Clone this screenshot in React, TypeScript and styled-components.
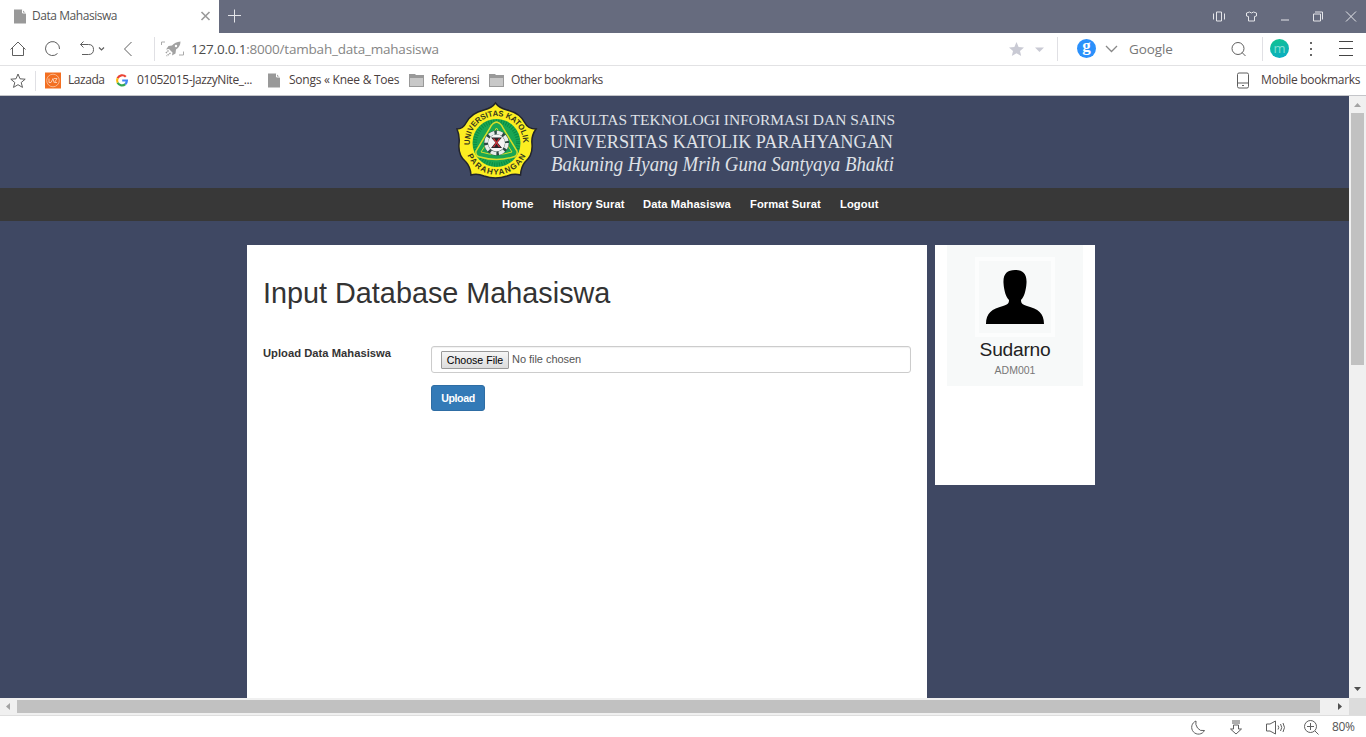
import React from "react";
import styled, { createGlobalStyle } from "styled-components";

const GlobalStyle = createGlobalStyle`
  * { box-sizing: border-box; }
  body { margin: 0; overflow: hidden; background: #3f4863; }
  button { font-family: inherit; margin: 0; }
`;

const uiFont = `"Open Sans", "Noto Sans", sans-serif`;
const pageFont = `"Liberation Sans", Arial, sans-serif`;

const Window = styled.div`
  width: 1366px;
  height: 737px;
  display: flex;
  flex-direction: column;
  background: #fff;
  overflow: hidden;
  font-family: ${uiFont};
`;

/* ---------- browser chrome ---------- */
const TitleBar = styled.header`
  height: 33px;
  flex: none;
  display: flex;
  align-items: center;
  background: #666b7e;
`;
const Tab = styled.div`
  width: 219px;
  height: 33px;
  display: flex;
  align-items: center;
  padding: 0 9px 0 14px;
  background: #fff;
`;
const Toolbar = styled.div`
  height: 33px;
  flex: none;
  display: flex;
  align-items: center;
  border-bottom: 1px solid #e2e2e4;
`;
const BookmarkBar = styled.nav`
  height: 30px;
  flex: none;
  display: flex;
  align-items: center;
  border-bottom: 1px solid #c4c5c9;
`;
const Icon = styled.svg<{ $left?: number }>`
  display: block;
  flex: none;
  overflow: visible;
  margin-left: ${(p) => p.$left ?? 0}px;
  fill: none;
  stroke: #5f5f5f;
`;
const Label = styled.span<{ $left?: number; $spacing?: number; $size?: number; $color?: string }>`
  flex: none;
  white-space: nowrap;
  line-height: 18px;
  margin-top: -1px;
  margin-left: ${(p) => p.$left ?? 0}px;
  font-size: ${(p) => p.$size ?? 12}px;
  letter-spacing: ${(p) => p.$spacing ?? 0}px;
  color: ${(p) => p.$color ?? "#4a4040"};
`;
const Host = styled.span`
  color: #4c4c4c;
`;
const Fixed = styled.div<{ $width: number }>`
  width: ${(p) => p.$width}px;
  flex: none;
  display: flex;
  align-items: center;
`;
const Spacer = styled.div`
  flex: 1;
`;
const Rule = styled.i<{ $left?: number; $height?: number }>`
  width: 1px;
  height: ${(p) => p.$height ?? 24}px;
  flex: none;
  margin-left: ${(p) => p.$left ?? 0}px;
  background: #e0e0e4;
`;
const Badge = styled.span<{ $left: number; $bg: string; $color: string }>`
  width: 19px;
  height: 19px;
  flex: none;
  margin-top: -1px;
  margin-left: ${(p) => p.$left}px;
  border-radius: 50%;
  display: flex;
  align-items: center;
  justify-content: center;
  background: ${(p) => p.$bg};
  color: ${(p) => p.$color};
`;
const BadgeSerif = styled.b`
  font: bold 17px/14px "Liberation Serif", serif;
  margin-top: -5px;
`;
const BadgeSans = styled.span`
  font: 13px/14px ${uiFont};
  margin-top: -2px;
`;

/* ---------- viewport and scrollbars ---------- */
const Viewport = styled.div`
  flex: 1;
  min-height: 0;
  display: flex;
`;
const Page = styled.main`
  width: 1349px;
  display: flex;
  flex-direction: column;
  background: #3f4863;
  font-family: ${pageFont};
`;
const VScroll = styled.div`
  width: 17px;
  display: flex;
  flex-direction: column;
  justify-content: space-between;
  align-items: center;
  background: #f0f0f0;
  padding: 7px 0;
`;
const VThumb = styled.div`
  width: 13px;
  height: 252px;
  margin: 6px 0 auto;
  background: #c1c1c1;
`;
const HScrollRow = styled.div`
  height: 17px;
  flex: none;
  display: flex;
  background: #dcdcdc;
`;
const HScroll = styled.div`
  width: 1349px;
  display: flex;
  align-items: center;
  background: #f0f0f0;
  padding: 0 7px 0 6px;
`;
const HThumb = styled.div`
  width: 1303px;
  height: 13px;
  margin: 0 auto 0 7px;
  background: #c1c1c1;
`;
const StatusBar = styled.footer`
  height: 22px;
  flex: none;
  display: flex;
  align-items: center;
  justify-content: flex-end;
  border-top: 1px solid #dedede;
  background: #fff;
  padding: 2px 11px 0 0;
`;

/* ---------- site ---------- */
const Banner = styled.div`
  height: 92px;
  flex: none;
  padding-left: 450px;
`;
const Brand = styled.svg`
  display: block;
  overflow: visible;
`;
const SiteNav = styled.nav`
  height: 33px;
  flex: none;
  display: flex;
  align-items: center;
  gap: 19px;
  padding: 0 0 2px 502px;
  background: #383838;
`;
const NavLink = styled.a<{ $width: number }>`
  width: ${(p) => p.$width}px;
  white-space: nowrap;
  font-size: 11.2px;
  font-weight: bold;
  line-height: 16px;
  letter-spacing: 0.1px;
  color: #fff;
`;
const Columns = styled.div`
  flex: 1;
  display: flex;
  align-items: flex-start;
  gap: 8px;
  padding: 24px 0 0 247px;
`;
const MainPanel = styled.section`
  width: 680px;
  align-self: stretch;
  padding: 30px 16px 0;
  background: #fff;
`;
const Heading = styled.h1`
  margin: 0;
  font-size: 28.8px;
  line-height: 36px;
  font-weight: normal;
  white-space: nowrap;
  color: #333;
`;
const FormRow = styled.form`
  display: flex;
  margin-top: 35px;
`;
const FieldLabel = styled.label`
  width: 168px;
  font-size: 11.2px;
  font-weight: bold;
  line-height: 14px;
  letter-spacing: 0.03px;
  color: #333;
`;
const Field = styled.div`
  flex: 1;
  display: flex;
  flex-direction: column;
  align-items: flex-start;
  gap: 12px;
`;
const FileBox = styled.div`
  width: 480px;
  height: 27px;
  display: flex;
  align-items: center;
  gap: 3px;
  padding-left: 9px;
  border: 1px solid #ccc;
  border-radius: 3px;
  box-shadow: inset 0 1px 1px rgba(0, 0, 0, 0.06);
`;
const ChooseButton = styled.button`
  width: 68px;
  height: 18px;
  padding: 0;
  border: 1px solid #999;
  border-radius: 1px;
  background: linear-gradient(#f5f5f5, #dcdcdc);
  font-size: 10.6px;
  line-height: 16px;
  white-space: nowrap;
  color: #000;
`;
const FileName = styled.span`
  margin-top: -2px;
  font-size: 11px;
  line-height: 16px;
  letter-spacing: -0.04px;
  color: #555;
`;
const UploadButton = styled.button`
  width: 54px;
  height: 26px;
  padding: 0;
  border: 1px solid #2e6da4;
  border-radius: 3px;
  background: #337ab7;
  color: #fff;
  font-size: 10.6px;
  letter-spacing: -0.4px;
  font-weight: bold;
`;
const SidePanel = styled.aside`
  width: 160px;
  height: 240px;
  padding: 0 12px;
  background: #fff;
`;
const Profile = styled.div`
  height: 141px;
  display: flex;
  flex-direction: column;
  align-items: center;
  padding-top: 12px;
  background: #f7f9f9;
`;
const Portrait = styled.div`
  width: 80px;
  height: 80px;
  border: 4px solid #fcfdfd;
  display: flex;
  justify-content: center;
  padding-top: 9px;
`;
const ProfileName = styled.div`
  margin-top: 2px;
  font-size: 19.2px;
  line-height: 22px;
  letter-spacing: -0.25px;
  color: #222;
`;
const ProfileId = styled.div`
  margin-top: 2px;
  font-size: 10.5px;
  line-height: 14px;
  color: #777;
`;

const PageIcon = ({ left }: { left?: number }) => (
  <Icon $left={left} width="12" height="14" viewBox="0 0 12 14">
    <path d="M0 -0.500H8L12 3.500V13.500H0Z" fill="#999" stroke="none" />
    <path d="M8.500 -0.500V3H12" stroke="#fff" strokeWidth="1" />
  </Icon>
);

const FolderIcon = ({ left }: { left?: number }) => (
  <Icon $left={left} width="15" height="13" viewBox="0 0 15 13">
    <path d="M0 0H6L7 1H15V13H0Z" fill="#999" stroke="none" />
    <path d="M1 4H14V12H1Z" fill="#c8c8c8" stroke="none" />
  </Icon>
);

const Crest = () => (
  <>
    <defs>
      <path id="arcTop" d="M20 49A26.600 26.600 0 1 1 73 49" />
      <path id="arcBottom" d="M14.800 47A31.700 31.700 0 0 0 78.200 47" />
    </defs>
    <path
      d="M45.500 7Q49 12 57 14Q70 17 75 27Q78 33 86 33Q81 40 82 48Q83 60 75 66Q71 71 70.500 79Q64 77 57 80Q45.500 84 34 80Q27 77 21 79Q20.500 71 16 66Q8 60 9 48Q10 40 7 33Q13 33 16 27Q21 17 34 14Q42 12 45.500 7Z"
      fill="#fcee21"
      stroke="#22242c"
      strokeWidth="1.5"
    />
    <circle cx="46.500" cy="47" r="24" fill="#1aa653" />
    <circle cx="46.500" cy="47" r="21.500" fill="none" stroke="#0c8a41" strokeWidth="4" strokeDasharray="1 1.500" />
    <path d="M46.500 26Q51 27 53 32L67 55Q68 60 63 61Q46.500 66 30 61Q25 60 26 55L40 32Q42 27 46.500 26Z" fill="#1aa653" stroke="#d5dc2a" strokeWidth="1.500" />
    <path d="M46.500 32L62 56Q46.500 61 31 56Z" fill="none" stroke="#d5dc2a" strokeWidth="1" />
    <circle cx="46.500" cy="47" r="12.500" fill="#2e4a44" />
    <circle cx="46.500" cy="47" r="10.500" fill="none" stroke="#e9ecea" strokeWidth="3.500" strokeDasharray="5.800 2.450" />
    <circle cx="46.500" cy="47" r="8.500" fill="#f4f4f4" />
    <path d="M42 42L51 52H42L51 42Z" fill="#d8323a" />
    <path d="M41 41.500H52L47.500 46.500L52 52H41L45.500 46.500Z" fill="#26262a" />
    <path d="M43.500 42.500L49.500 51M49.500 42.500L43.500 51" stroke="#d8323a" strokeWidth="1.300" />
    <g fill="#33371c" fontFamily="Liberation Sans, sans-serif" fontWeight="bold">
      <text fontSize="8">
        <textPath href="#arcTop" startOffset="0" textLength="86" lengthAdjust="spacingAndGlyphs">UNIVERSITAS KATOLIK</textPath>
      </text>
      <text fontSize="8">
        <textPath href="#arcBottom" startOffset="12.500" textLength="74">PARAHYANGAN</textPath>
      </text>
    </g>
  </>
);

const navItems: [string, number][] = [
  ["Home", 32],
  ["History Surat", 71],
  ["Data Mahasiswa", 88],
  ["Format Surat", 71],
  ["Logout", 39],
];

export default function App() {
  return (
    <Window>
      <GlobalStyle />
      <TitleBar>
        <Tab>
          <PageIcon />
          <Label $left={6} $spacing={-0.45} $color="#555">Data Mahasiswa</Label>
          <Spacer />
          <Icon width="9" height="9" viewBox="0 0 9 9">
            <path d="M0.500 0L8.500 8M8.500 0L0.500 8" stroke="#999" strokeWidth="1.600" />
          </Icon>
        </Tab>
        <Icon $left={9} width="13" height="13" viewBox="0 0 13 13">
          <path d="M6.500 -0.500V12.500M0 5.500H13" stroke="#e4e5e9" />
        </Icon>
        <Spacer />
        <Icon width="12" height="10" viewBox="0 0 12 10">
          <path d="M3.500 0H8.500V9H3.500ZM0.500 1.500V7.500M11.500 1.500V7.500" stroke="#e4e5e9" />
        </Icon>
        <Icon $left={21} width="11" height="10" viewBox="0 0 11 10">
          <path d="M3.500 0Q5.500 2 7.500 0L10.500 1V4L8.500 4.500V9H2.500V4.500L0.500 4V1Z" stroke="#e4e5e9" />
        </Icon>
        <Icon $left={24} width="8" height="10" viewBox="0 0 8 10">
          <path d="M0 8H8" stroke="#e4e5e9" />
        </Icon>
        <Icon $left={24} width="10" height="10" viewBox="0 0 10 10">
          <path d="M0.500 2H7.500V9H0.500ZM2 0H9.500V7.500" stroke="#e4e5e9" />
        </Icon>
        <Icon $left={23} width="10" height="10" viewBox="0 0 10 10">
          <path d="M0 -0.500L10 9.500M10 -0.500L0 9.500" stroke="#e4e5e9" />
        </Icon>
        <Fixed $width={10} />
      </TitleBar>

      <Toolbar>
        <Icon $left={10} width="16" height="16" viewBox="0 0 16 16">
          <path d="M0.500 8.500L8 1L15.500 8.500M2.500 7V14.500H13.500V7" />
        </Icon>
        <Icon $left={19} width="15" height="16" viewBox="0 0 15 16">
          <path d="M12.500 12.500A7 7 0 1 1 14.500 8" />
        </Icon>
        <Icon $left={20} width="14" height="16" viewBox="0 0 14 16">
          <path d="M0.500 3.500H8.500Q13.500 3.500 13.500 8.500T8.500 13.500H2M3.500 0.500L0.500 3.500L3.500 6.500" />
        </Icon>
        <Icon $left={5} width="5" height="4" viewBox="0 0 5 4">
          <path d="M0 0.500L2.500 3L5 0.500" strokeWidth="1.200" />
        </Icon>
        <Icon $left={20} width="8" height="15" viewBox="0 0 8 15">
          <path d="M7.500 0L0.500 7L7.500 14" />
        </Icon>
        <Rule $left={22} />
        <Icon $left={5} width="25" height="15" viewBox="0 0 25 15">
          <path d="M1.500 3V0H5M19 13H23.500V9.500" stroke="#aaa" />
          <path d="M20.500 -0.500Q15 0 12 3.500L8.500 4L6 7.500L9 7L12.500 10.500L12 13.500L15.500 11.500L16 7.500Q20.500 4.500 20.500 -0.500Z" fill="#a2a2a2" stroke="none" />
          <path d="M8.500 8.500L5.500 11.500M10.500 11L6.500 14" stroke="#a2a2a2" strokeWidth="1.400" strokeDasharray="1.500 0.700" />
          <circle cx="16" cy="4" r="1.200" fill="#fff" stroke="none" />
        </Icon>
        <Fixed $width={0}>
          <Label $left={6} $size={13.5} $spacing={-0.2} $color="#858585">
            <Host>127.0.0.1</Host>:8000/tambah_data_mahasiswa
          </Label>
        </Fixed>
        <Spacer />
        <Icon width="15" height="14" viewBox="0 0 15 14">
          <path d="M7.500 0L9.600 4.900L15 5.400L11 8.900L12.200 14L7.500 11.300L2.800 14L4 8.900L0 5.400L5.400 4.900Z" fill="#c9cad4" stroke="none" />
        </Icon>
        <Icon $left={11} width="9" height="5" viewBox="0 0 9 5">
          <path d="M0 0.500H9L4.500 5Z" fill="#c9cad4" stroke="none" />
        </Icon>
        <Rule $left={13} />
        <Badge $left={19} $bg="#2b90fb" $color="#fff"><BadgeSerif>g</BadgeSerif></Badge>
        <Icon $left={10} width="11" height="7" viewBox="0 0 11 7">
          <path d="M0 0L5.500 5.500L11 0" stroke="#888" strokeWidth="1.300" />
        </Icon>
        <Fixed $width={114}>
          <Label $left={12} $size={13.5} $spacing={-0.1} $color="#777">Google</Label>
        </Fixed>
        <Icon width="15" height="15" viewBox="0 0 15 15">
          <circle cx="7" cy="6.500" r="6" />
          <path d="M11 10.500L14.500 14" />
        </Icon>
        <Rule $left={16} />
        <Badge $left={7} $bg="linear-gradient(160deg, #0fc48d, #0aabc8)" $color="#83dfd2"><BadgeSans>m</BadgeSans></Badge>
        <Icon $left={21} width="2" height="14" viewBox="0 0 2 14">
          <path d="M0 0H2V2H0ZM0 6H2V8H0ZM0 12H2V14H0Z" fill="#666" stroke="none" />
        </Icon>
        <Icon $left={27} width="14" height="16" viewBox="0 0 14 16">
          <path d="M0 0.500H14M0 7.500H14M0 14.500H14" stroke="#444" />
        </Icon>
        <Fixed $width={13} />
      </Toolbar>

      <BookmarkBar>
        <Icon $left={10} width="16" height="15" viewBox="0 0 16 15">
          <path d="M8 1L10 5.800L15.200 6.200L11.200 9.500L12.500 14.400L8 11.700L3.500 14.400L4.800 9.500L0.800 6.200L6 5.800Z" />
        </Icon>
        <Rule $left={9} $height={20} />
        <Icon $left={9} width="16" height="16" viewBox="0 0 16 16">
          <path d="M0 -0.500H16V15.500H0Z" fill="#f36f21" stroke="none" />
          <circle cx="8" cy="7.500" r="6.300" stroke="#fbc7a4" strokeWidth="0.800" />
          <path d="M4 5.500V9.500H6L8 5.500L9 9.500M9 5.500H12L9.500 9.500H12" stroke="#fde0cc" strokeWidth="0.800" />
        </Icon>
        <Fixed $width={55}><Label $left={7} $spacing={-0.45}>Lazada</Label></Fixed>
        <Icon width="12" height="12" viewBox="0 0 12 12" strokeWidth="2.200">
          <path d="M9.800 1.800A5 5 0 0 0 1.600 3.300" stroke="#ea4335" />
          <path d="M1.600 3.300A5 5 0 0 0 1.600 7.800" stroke="#fbbc05" />
          <path d="M1.600 7.800A5 5 0 0 0 9.300 9.200" stroke="#34a853" />
          <path d="M9.300 9.200A5 5 0 0 0 10.900 5.500H6.200" stroke="#4285f4" />
        </Icon>
        <Fixed $width={140}><Label $left={9} $spacing={-0.4}>01052015-JazzyNite_...</Label></Fixed>
        <PageIcon />
        <Fixed $width={129}><Label $left={9} $spacing={-0.25}>Songs « Knee &amp; Toes</Label></Fixed>
        <FolderIcon />
        <Fixed $width={65}><Label $left={7} $spacing={-0.5}>Referensi</Label></Fixed>
        <FolderIcon />
        <Label $left={7} $spacing={-0.45}>Other bookmarks</Label>
        <Spacer />
        <Icon width="12" height="16" viewBox="0 0 12 16">
          <rect x="0.500" y="0" width="11" height="15" rx="1.500" />
          <path d="M0.500 10H11.500M5 12.500H7" strokeWidth="1.200" />
        </Icon>
        <Fixed $width={117}><Label $left={12} $spacing={-0.3}>Mobile bookmarks</Label></Fixed>
      </BookmarkBar>

      <Viewport>
        <Page>
          <Banner>
            <Brand width="450" height="92" viewBox="0 0 450 92">
              <Crest />
              <g fill="#dfe1e7" fontFamily="Liberation Serif, serif">
                <text x="100" y="29" fontSize="15" textLength="345" lengthAdjust="spacingAndGlyphs">FAKULTAS TEKNOLOGI INFORMASI DAN SAINS</text>
                <text x="100" y="52" fontSize="18.500" textLength="343" lengthAdjust="spacingAndGlyphs">UNIVERSITAS KATOLIK PARAHYANGAN</text>
                <text x="101" y="75" fontSize="20" fontStyle="italic" textLength="343" lengthAdjust="spacingAndGlyphs">Bakuning Hyang Mrih Guna Santyaya Bhakti</text>
              </g>
            </Brand>
          </Banner>
          <SiteNav>
            {navItems.map(([text, width]) => (
              <NavLink key={text} $width={width}>{text}</NavLink>
            ))}
          </SiteNav>
          <Columns>
            <MainPanel>
              <Heading>Input Database Mahasiswa</Heading>
              <FormRow>
                <FieldLabel>Upload Data Mahasiswa</FieldLabel>
                <Field>
                  <FileBox>
                    <ChooseButton type="button">Choose File</ChooseButton>
                    <FileName>No file chosen</FileName>
                  </FileBox>
                  <UploadButton type="button">Upload</UploadButton>
                </Field>
              </FormRow>
            </MainPanel>
            <SidePanel>
              <Profile>
                <Portrait>
                  <svg width="58" height="54" viewBox="0 0 58 54">
                    <path d="M29 0C37 0 41 4 40.500 13C40 21 38 27 35 30C35 34 37 34.500 41 36C52 39 58 43 58 54H0C0 43 6 39 17 36C21 34.500 23 34 23 30C20 27 18 21 17.500 13C17 4 21 0 29 0Z" fill="#000" />
                  </svg>
                </Portrait>
                <ProfileName>Sudarno</ProfileName>
                <ProfileId>ADM001</ProfileId>
              </Profile>
            </SidePanel>
          </Columns>
        </Page>
        <VScroll>
          <Icon width="7" height="4" viewBox="0 0 7 4"><path d="M0 4L3.500 0L7 4Z" fill="#a3a3a3" stroke="none" /></Icon>
          <VThumb />
          <Icon width="7" height="4" viewBox="0 0 7 4"><path d="M0 0L3.500 4L7 0Z" fill="#505050" stroke="none" /></Icon>
        </VScroll>
      </Viewport>
      <HScrollRow>
        <HScroll>
          <Icon width="4" height="7" viewBox="0 0 4 7"><path d="M4 0L0 3.500L4 7Z" fill="#a3a3a3" stroke="none" /></Icon>
          <HThumb />
          <Icon width="4" height="7" viewBox="0 0 4 7"><path d="M0 0L4 3.500L0 7Z" fill="#505050" stroke="none" /></Icon>
        </HScroll>
      </HScrollRow>
      <StatusBar>
        <Icon width="14" height="14" viewBox="0 0 14 14">
          <path d="M5 0A6.800 6.800 0 1 0 13.500 9.500Q9 10.500 6.500 7T5 0Z" />
        </Icon>
        <Icon $left={25} width="12" height="14" viewBox="0 0 12 14">
          <path d="M2 0H10M2 2H10M3.500 5V4H8.500V8H11.500L6 13L0.500 8H3.500V4.500" />
        </Icon>
        <Icon $left={24} width="19" height="14" viewBox="0 0 19 14">
          <path d="M0.500 3H4L9.500 0V13L4 10H0.500ZM12 4.500Q13.500 6.500 12 8.500M14.500 3Q17 6.500 14.500 10M17 2Q20 6.500 17 11" />
        </Icon>
        <Icon $left={19} width="15" height="15" viewBox="0 0 15 15">
          <circle cx="6.500" cy="6.500" r="6" />
          <path d="M3 6.500H10M6.500 3V10M11 11L14.500 14.500" />
        </Icon>
        <Fixed $width={36}><Label $left={13} $spacing={-0.4} $color="#555">80%</Label></Fixed>
      </StatusBar>
    </Window>
  );
}
